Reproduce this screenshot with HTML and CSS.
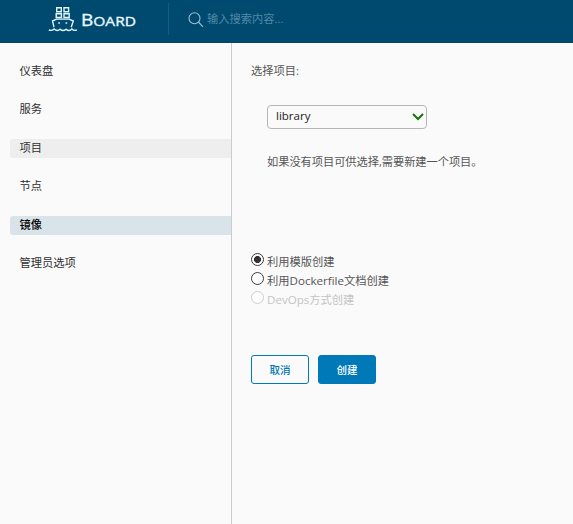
FILE: index.html
```html
<!DOCTYPE html>
<html lang="zh-CN">
<head>
<meta charset="utf-8">
<title>Board</title>
<link rel="stylesheet" href="styles.css">
</head>
<body>
<header class="header">
  <div class="brand">
    <svg class="logo" width="30" height="26" viewBox="0 0 30 26" fill="none" stroke="#dff5fc" stroke-width="1.4">
      <path d="M8.7 1.7h4.6v4H8.7zM16 1.7h4.6v4H16zM8.2 7.7h5.2v3.8H8.2zM16 7.7h5.2v3.8H16z"/>
      <path d="M6 21.2 4.5 15 8.5 13.1H21L25.3 15 23.2 21.2"/>
      <path d="M.8 24c2 .8 3.8.4 5.3-1 2.2 2 4 2 6 .2 2 1.8 4 1.8 6 0 2 1.8 4 1.8 5.8-.2 1.4 1.4 3 1.8 5 1"/>
      <path d="M10.3 17h1.6M17.6 17h1.6"/>
    </svg>
    <span class="brand-name">B<span class="small-cap">OARD</span></span>
  </div>
  <div class="search">
    <svg width="16" height="16" viewBox="0 0 16 16" fill="none" stroke="#9cc0d2" stroke-width="1.1"><circle cx="6.5" cy="6.2" r="5.5"/><path d="m10.4 10 4.6 4.8"/></svg>
    <span class="placeholder">输入搜索内容...</span>
  </div>
</header>
<div class="body">
  <nav class="sidebar">
    <a class="item">仪表盘</a>
    <a class="item">服务</a>
    <a class="item hover">项目</a>
    <a class="item">节点</a>
    <a class="item active">镜像</a>
    <a class="item">管理员选项</a>
  </nav>
  <main class="content">
    <div class="label">选择项目:</div>
    <div class="select"><span>library</span>
      <svg width="12" height="8" viewBox="0 0 12 8" fill="none" stroke="#1c7010" stroke-width="2"><path d="m1 1 5 5 5-5"/></svg>
    </div>
    <p class="hint">如果没有项目可供选择,需要新建一个项目。</p>
    <div class="options">
      <div class="option"><i class="radio checked"></i><span>利用模版创建</span></div>
      <div class="option"><i class="radio"></i><span>利用<span class="latin">Dockerfile</span>文档创建</span></div>
      <div class="option disabled"><i class="radio"></i><span><span class="latin">DevOps</span>方式创建</span></div>
    </div>
    <div class="buttons">
      <div class="btn">取消</div>
      <div class="btn primary">创建</div>
    </div>
  </main>
</div>
</body>
</html>
```
FILE: styles.css
```css
* { box-sizing: border-box; }
body {
  margin: 0;
  height: 524px;
  display: flex;
  flex-direction: column;
  overflow: hidden;
  background: #fafafa;
  color: #565656;
  font: 11.25px/19px "Open Sans", "Noto Sans CJK SC", sans-serif;
}
.header {
  height: 43px;
  flex: none;
  display: flex;
  background: #004a70;
  border-bottom: 1px solid #0b4262;
}
.brand { width: 168px; padding: 6px 0 0 48px; display: flex; }
.logo { flex: none; }
.brand-name {
  margin-left: 3px;
  height: 26px;
  font: 16.5px/28px "Open Sans", sans-serif;
  color: #e9f8fc;
  transform: scaleX(1.15);
  transform-origin: left;
  -webkit-text-stroke: .35px #e9f8fc;
}
.small-cap { font-size: 13.5px; }
.search {
  height: 32px;
  margin-top: 3px;
  padding: 9px 0 0 19px;
  border-left: 1px solid #1b5b7d;
  display: flex;
}
.placeholder { margin: -3px 0 0 3px; color: #5289a5; }
.body { flex: 1; display: flex; }
.sidebar {
  width: 232px;
  padding: 19px 0 0 10px;
  border-right: 1px solid #ccc;
  display: flex;
  flex-direction: column;
  gap: 19.4px;
}
.item { height: 19px; padding-left: 9.5px; line-height: 18px; color: #303030; border-radius: 3px 0 0 3px; }
.hover { background: #eee; }
.active { background: #d9e4ea; color: #000; font-weight: 500; }
.content { padding: 19px 0 0 19px; }
.label { height: 19px; line-height: 18px; }
.select {
  width: 160px;
  height: 24px;
  margin: 24px 0 0 16px;
  padding: 0 2px 0 8px;
  border: 1px solid #b5b5b5;
  border-radius: 4px;
  display: flex;
  align-items: center;
  justify-content: space-between;
  color: #222;
  font-size: 11.5px;
}
.select span { line-height: 20px; margin-top: -2px; }
.hint { margin: 23px 0 0 16px; letter-spacing: -.06px; }
.options { margin-top: 82px; }
.option { height: 19px; display: flex; gap: 3px; }
.radio {
  width: 13px;
  height: 13px;
  border: 1px solid #3c3c3c;
  border-radius: 50%;
  background: #fff;
}
.checked { background: radial-gradient(circle, #333 0 3.2px, #fff 3.8px); }
.option > span { margin-top: -1px; }
.disabled { color: #c4c4c4; }
.disabled .radio { border-color: #ccc; }
.latin { font-size: 11.6px; }
.buttons { margin-top: 45px; display: flex; gap: 9px; }
.btn {
  width: 58px;
  height: 29px;
  border: 1px solid #0079b8;
  border-radius: 3px;
  color: #0079b8;
  font-size: 10.5px;
  font-weight: 500;
  line-height: 28px;
  text-align: center;
}
.primary { background: #0079b8; color: #fff; }
```
